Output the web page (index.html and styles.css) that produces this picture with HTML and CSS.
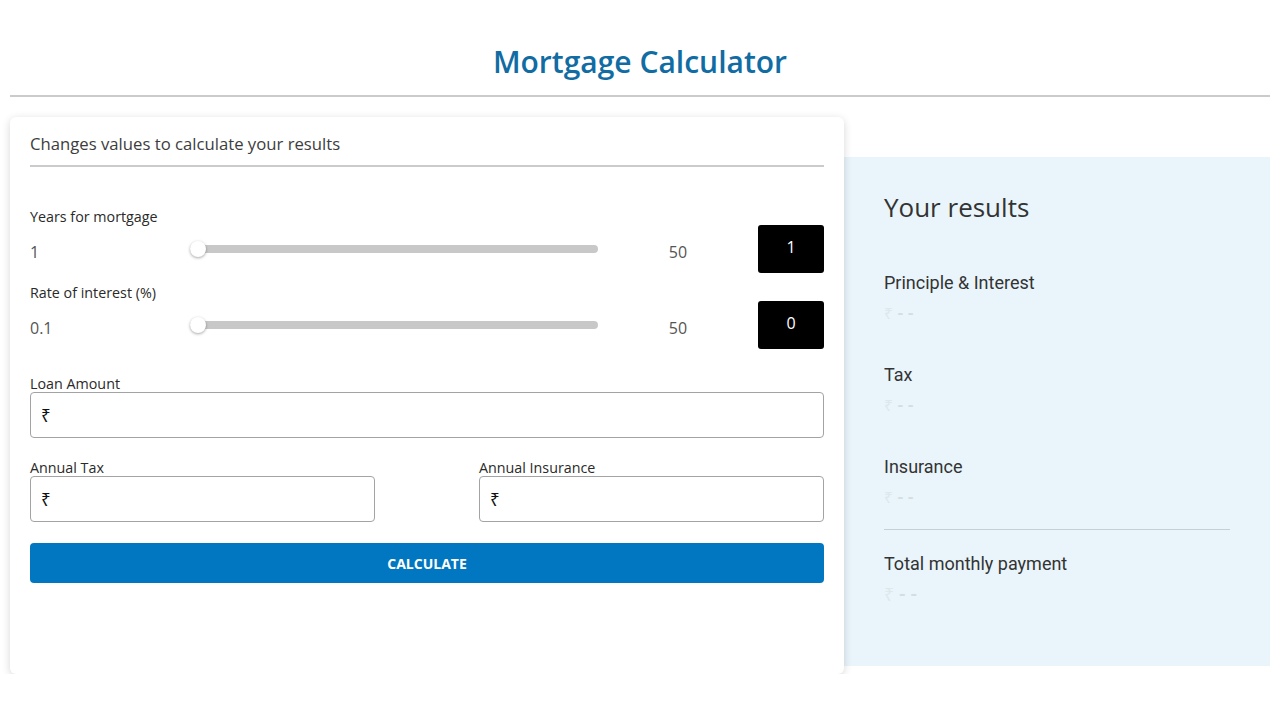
FILE: index.html
```html
<!DOCTYPE html>
<html lang="en">
<head>
    <meta charset="UTF-8">
    <meta name="viewport" content="width=device-width, initial-scale=1.0">
    <title>Mortgage Calculator</title>
    <link rel="stylesheet" href="styles.css">
</head>
<body>
    <header class="page-header">
        <h1>Mortgage Calculator</h1>
    </header>

    <main class="layout">
        <section class="calc-card">
            <p class="calc-intro">Changes values to calculate your results</p>

            <div class="sliders">
                <div class="slider-block">
                    <label class="field-label" for="years">Years for mortgage</label>
                    <div class="slider-row">
                        <span class="range-min">1</span>
                        <input type="range" id="years" min="1" max="50" step="1" value="1">
                        <span class="range-max">50</span>
                        <div class="range-value" id="yearsValue">1</div>
                    </div>
                </div>
                <div class="slider-block">
                    <label class="field-label" for="rate">Rate of interest (%)</label>
                    <div class="slider-row">
                        <span class="range-min">0.1</span>
                        <input type="range" id="rate" min="0.1" max="50" step="0.1" value="0.1">
                        <span class="range-max">50</span>
                        <div class="range-value" id="rateValue">0</div>
                    </div>
                </div>
            </div>

            <div class="field field-wide">
                <label class="field-label" for="loan">Loan Amount</label>
                <div class="money-input">
                    <span class="currency">₹</span>
                    <input type="text" id="loan">
                </div>
            </div>

            <div class="field-pair">
                <div class="field">
                    <label class="field-label" for="tax">Annual Tax</label>
                    <div class="money-input">
                        <span class="currency">₹</span>
                        <input type="text" id="tax">
                    </div>
                </div>
                <div class="field">
                    <label class="field-label" for="insurance">Annual Insurance</label>
                    <div class="money-input">
                        <span class="currency">₹</span>
                        <input type="text" id="insurance">
                    </div>
                </div>
            </div>

            <button class="calc-button" type="button">CALCULATE</button>
        </section>

        <aside class="results">
            <h2>Your results</h2>
            <div class="result-item">
                <div class="result-label">Principle &amp; Interest</div>
                <div class="result-value"><span class="rupee">₹</span> - -</div>
            </div>
            <div class="result-item">
                <div class="result-label">Tax</div>
                <div class="result-value"><span class="rupee">₹</span> - -</div>
            </div>
            <div class="result-item">
                <div class="result-label">Insurance</div>
                <div class="result-value"><span class="rupee">₹</span> - -</div>
            </div>
            <div class="result-item result-total">
                <div class="result-label">Total monthly payment</div>
                <div class="result-value"><span class="rupee">₹</span> - -</div>
            </div>
        </aside>
    </main>
</body>
</html>
```

FILE: styles.css
```css
body {
    margin: 0;
    font-family: "Open Sans", Arial, sans-serif;
    color: #333;
    background: #fff;
}

.page-header {
    margin: 0 10px;
    padding: 40px 0 11px;
    border-bottom: 2px solid #cbcbcb;
    text-align: center;
}

.page-header h1 {
    margin: 0;
    font-size: 30px;
    line-height: 44px;
    font-weight: 600;
    color: #106ca3;
}

.layout {
    display: flex;
    align-items: flex-start;
    margin: 20px 10px 0;
}

/* left card */
.calc-card {
    box-sizing: border-box;
    width: 834px;
    height: 557px;
    padding: 16px 20px;
    background: #fff;
    border-radius: 6px;
    box-shadow: 0 2px 8px rgba(0, 0, 0, 0.16);
    position: relative;
    z-index: 1;
}

.calc-intro {
    margin: 0;
    padding-bottom: 10px;
    font-size: 16.7px;
    line-height: 22px;
    color: #3d3d3d;
    border-bottom: 2px solid #cbcbcb;
}

.field-label {
    display: block;
    font-size: 14.3px;
    line-height: 16px;
    font-weight: 500;
    color: #2a2a2a;
}

.sliders {
    margin-top: 42px;
}

.slider-block {
    margin-bottom: 12px;
}

.slider-row {
    display: grid;
    grid-template-columns: 160px 408px 1fr 66px;
    align-items: center;
    height: 48px;
}

.range-min,
.range-max {
    font-size: 16px;
    color: #555;
    padding-top: 6px;
}

.range-max {
    text-align: center;
}

.slider-row input[type="range"] {
    -webkit-appearance: none;
    appearance: none;
    width: 100%;
    height: 8px;
    margin: 0;
    background: #c8c8c8;
    border-radius: 4px;
    outline: none;
}

.slider-row input[type="range"]::-webkit-slider-thumb {
    -webkit-appearance: none;
    width: 16px;
    height: 16px;
    border-radius: 50%;
    background: #fff;
    box-shadow: 0 1px 3px rgba(0, 0, 0, 0.35);
    cursor: pointer;
}

.range-value {
    height: 48px;
    display: flex;
    align-items: center;
    justify-content: center;
    padding-bottom: 5px;
    box-sizing: border-box;
    background: #000;
    color: #fff;
    border-radius: 3px;
    font-size: 16px;
}

/* money fields */
.field-wide {
    margin-top: 27px;
    margin-bottom: 22px;
}

.field-pair {
    display: grid;
    grid-template-columns: 1fr 1fr;
    column-gap: 104px;
}

.money-input {
    display: flex;
    align-items: center;
    height: 46px;
    box-sizing: border-box;
    padding: 0 10px;
    border: 1px solid #a3a3a3;
    border-radius: 4px;
}

.currency {
    font-family: "Noto Sans", "DejaVu Sans", sans-serif;
    font-size: 17px;
    color: #111;
}

.money-input input {
    flex: 1;
    border: none;
    outline: none;
    font-family: inherit;
    font-size: 16px;
    margin-left: 6px;
    background: transparent;
}

.calc-button {
    display: block;
    width: 100%;
    height: 40px;
    margin-top: 21px;
    border: none;
    border-radius: 4px;
    background: #0077c0;
    color: #fff;
    font-family: "Open Sans", Arial, sans-serif;
    font-size: 14px;
    font-weight: 700;
    cursor: pointer;
}

/* results panel */
.results {
    box-sizing: border-box;
    width: 426px;
    height: 509px;
    margin-top: 40px;
    padding: 32px 40px 0;
    background: #e9f5fb;
}

.results h2 {
    margin: 0 0 46px;
    font-size: 26px;
    line-height: 36px;
    font-weight: 400;
    color: #333;
}

.result-item {
    margin-bottom: 37px;
}

.result-label {
    font-family: Roboto, Arial, sans-serif;
    font-size: 18px;
    line-height: 24px;
    color: #333;
}

.result-value {
    margin-top: 6px;
    font-family: Roboto, Arial, sans-serif;
    font-size: 16px;
    line-height: 24px;
    font-weight: 700;
    color: #d3dde2;
}

.rupee {
    font-family: "Noto Sans", "DejaVu Sans", sans-serif;
    font-weight: 400;
    color: #dde8ed;
}

.result-item:nth-child(4) {
    margin-bottom: 19px;
}

.result-total {
    padding-top: 22px;
    border-top: 1px solid #c6d0d4;
}

.result-total .result-value {
    font-size: 18px;
}
```
